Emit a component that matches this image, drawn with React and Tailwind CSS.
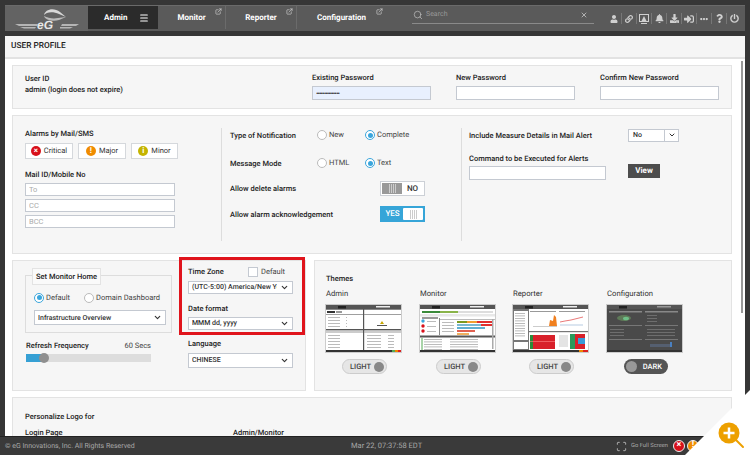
import { FaUser, FaLink, FaBell, FaDownload, FaSignInAlt, FaEllipsisH, FaQuestion, FaPowerOff } from "react-icons/fa";
import { Search, X, ExternalLink, Menu, ChevronDown, Scan } from "lucide-react";

const Label = ({ children, className = "" }) => (
  <div className={"text-[7.5px] leading-[11px] font-medium text-[#222] whitespace-nowrap " + className}>{children}</div>
);

const TextBox = ({ className = "", placeholder, value }) => (
  <input
    readOnly
    placeholder={placeholder}
    value={value}
    className={"block bg-white border border-[#c4c9d1] px-[3px] text-[7.5px] text-[#333] placeholder:text-[#aaa] outline-none " + className}
  />
);

const Select = ({ value, className = "" }) => (
  <div className={"flex items-center justify-between bg-white border border-[#c4c9d1] pl-[3px] pr-[3px] text-[7px] font-medium text-[#333] whitespace-nowrap overflow-hidden " + className}>
    <span className="overflow-hidden w-[88%]">{value}</span>
    <ChevronDown size={9} strokeWidth={3} className="shrink-0" />
  </div>
);

const Radio = ({ on, label, className = "" }) => (
  <div className={"flex items-center gap-[2px] text-[7.5px] text-[#444] whitespace-nowrap " + className}>
    <span className={"flex items-center justify-center w-[10px] h-[10px] rounded-full border bg-white " + (on ? "border-[#3ba6dc]" : "border-[#bbb]")}>
      {on && <span className="w-[5px] h-[5px] rounded-full bg-[#3ba6dc]" />}
    </span>
    {label}
  </div>
);

const Stripes = () => (
  <div className="flex gap-[1px]">
    {[0, 1, 2, 3].map((i) => (
      <span key={i} className="w-[1px] h-[9px] bg-[#ccc]" />
    ))}
  </div>
);

const ThemeToggle = ({ dark, className = "" }) =>
  dark ? (
    <div className={"flex items-center justify-between w-[44px] h-[15px] rounded-full bg-[#555] pl-[2px] pr-[6px] " + className}>
      <span className="w-[11px] h-[11px] rounded-full bg-[#999]" />
      <span className="text-[7.5px] font-medium text-white">DARK</span>
    </div>
  ) : (
    <div className={"flex items-center justify-between w-[45px] h-[15px] rounded-full bg-[#e6e6e6] border border-[#ccc] pl-[7px] pr-[2px] " + className}>
      <span className="text-[7.5px] font-medium text-[#444]">LIGHT</span>
      <span className="w-[10px] h-[10px] rounded-full bg-[#888]" />
    </div>
  );

const Logo = () => (
  <svg width="70" height="24" viewBox="0 0 70 24">
    <path d="M48 5 C42 0 33 2 32 8 C34 5 41 4 47 7 L54 10 Z" fill="#d8d8d8" />
    <path d="M32 9 C33 13 41 15 47 13 L54 10 L46 11 C41 12 36 11 32 9 Z" fill="#bbb" />
    <path d="M3 17 L26 17 L25 19 L7 19 Z M8 20 L24 20 L23 21.5 L12 21.5 Z" fill="#b5b5b5" />
    <path d="M67 17 L50 17 L49 19 L64 19 Z M61 20 L48 20 L48 21.5 L58 21.5 Z" fill="#b5b5b5" />
    <text x="25" y="22" fontSize="12" fontWeight="900" fontStyle="italic" fontFamily="Liberation Sans, sans-serif" fill="#e8e8e8">eG</text>
  </svg>
);

const NavTab = ({ label, className = "" }) => (
  <div className={"relative flex items-center justify-center h-full border-r border-[#6b6b6b] text-[8px] font-bold text-white " + className}>
    {label}
    <ExternalLink size={7} strokeWidth={2} className="absolute top-[2px] right-[3px] text-[#ddd]" />
  </div>
);

const MonitorAlert = () => (
  <svg width="10" height="10" viewBox="0 0 10 10" fill="none">
    <rect x="0.5" y="0.5" width="9" height="7" stroke="#d0d0d0" />
    <path d="M5 2 L8 8 H2 Z" fill="#d0d0d0" />
    <path d="M2 9.5 H8" stroke="#d0d0d0" />
  </svg>
);

const headerIcons = [
  <FaUser size={8} />,
  <FaLink size={8} />,
  <MonitorAlert />,
  <FaBell size={9} />,
  <FaDownload size={9} />,
  <FaSignInAlt size={10} />,
  <FaEllipsisH size={8} />,
  <FaQuestion size={9} />,
  <FaPowerOff size={9} />,
];

const AlarmButton = ({ bg, glyph, label, className = "" }) => (
  <div className={"flex items-center justify-center gap-[3px] h-[16px] bg-white border border-[#d5d8dc] text-[7.5px] text-[#333] " + className}>
    <span className={"flex items-center justify-center w-[10px] h-[10px] rounded-full text-[8px] font-bold text-white " + bg}>{glyph}</span>
    {label}
  </div>
);

const SwitchOff = () => (
  <div className="flex items-center w-[45px] h-[15px] bg-white border border-[#ccd0d6] p-[1px]">
    <div className="flex items-center justify-center w-[20px] h-full bg-[#999]"><Stripes /></div>
    <span className="flex-1 text-center text-[8px] font-medium text-[#333]">NO</span>
  </div>
);

const SwitchOn = () => (
  <div className="flex items-center w-[45px] h-[16px] bg-[#36a5d8] p-[2px]">
    <span className="flex-1 text-center text-[8px] font-medium text-white">YES</span>
    <div className="flex items-center justify-center w-[20px] h-full bg-white rounded-[1px]"><Stripes /></div>
  </div>
);

const Bars = ({ y, x, w, fill = "#aaa" }) => <rect x={x} y={y} width={w} height="0.8" fill={fill} />;

const ThumbChrome = ({ dark }) => (
  <>
    <rect width="75" height="47" fill={dark ? "#4a4a4a" : "#fff"} />
    <rect width="75" height="4" fill="#555" />
    <rect x="12" y="1" width="8" height="2.5" fill="#222" />
    <rect x="50" y="1" width="14" height="1.5" fill={dark ? "#999" : "#eee"} />
    <rect y="45" width="75" height="2" fill="#333" />
  </>
);

const ThumbAdmin = () => (
  <svg width="75" height="47" viewBox="0 0 75 47" className="block">
    <ThumbChrome />
    <rect x="0" y="4" width="75" height="1" fill="#888" />
    <rect x="37" y="4" width="1.2" height="41" fill="#555" />
    <rect x="0" y="24" width="75" height="1.4" fill="#555" />
    <rect x="1" y="6" width="8" height="2" fill="#333" />
    <rect x="10" y="6" width="6" height="2" fill="#999" />
    <rect x="0" y="9" width="37" height="0.8" fill="#888" />
    <rect x="38" y="9" width="37" height="0.8" fill="#888" />
    <rect x="0" y="26.5" width="37" height="1" fill="#999" />
    <rect x="38" y="26.5" width="37" height="1" fill="#999" />
    {[12, 15, 18, 21].map((y) => <Bars key={y} x={2} y={y} w={12} />)}
    {[12, 15, 18, 21].map((y) => <Bars key={y} x={20} y={y} w={1} />)}
    {[30, 33, 36, 39, 42].map((y) => <Bars key={y} x={2} y={y} w={12} />)}
    {[30, 33, 36, 39, 42].map((y) => <Bars key={y} x={41} y={y} w={14} />)}
    {[30, 33, 36, 39, 42].map((y) => <Bars key={y} x={62} y={y} w={6} />)}
    <path d="M56 16 L58 19 H54 Z" fill="#c9a800" />
    <rect x="51" y="20" width="10" height="1" fill="#555" />
    <rect x="66" y="45" width="3" height="2" fill="#5a5" />
    <rect x="69" y="45" width="3" height="2" fill="#e80" />
    <rect x="72" y="45" width="3" height="2" fill="#d22" />
  </svg>
);

const ThumbMonitor = () => (
  <svg width="75" height="47" viewBox="0 0 75 47" className="block">
    <ThumbChrome />
    <rect x="2" y="6" width="18" height="2" fill="#3a8a3a" />
    <rect x="20" y="6" width="18" height="2" fill="#8ab44a" />
    <rect x="38" y="6" width="35" height="2" fill="#ddd" />
    <rect x="0" y="9" width="75" height="2.5" fill="#e8e8e8" />
    <rect x="2" y="12" width="16" height="2" fill="#999" />
    <rect x="19" y="13" width="1" height="17" fill="#888" />
    {[16, 21, 26].map((y) => <circle key={y} cx="3" cy={y} r="1.7" fill={y === 16 ? "#3ba6dc" : "#d8101a"} />)}
    {[16, 21, 26].map((y) => <Bars key={y} x={7} y={y} w={9} />)}
    <rect x="20" y="14" width="55" height="1" fill="#bbb" />
    {[17, 20, 23, 26].map((y) => <Bars key={y} x={22} y={y} w={12} />)}
    <rect x="37" y="16" width="10" height="2" fill="#7a9a20" />
    <rect x="47" y="16" width="10" height="2" fill="#f0a030" />
    <rect x="57" y="16" width="16" height="2" fill="#e03030" />
    <rect x="37" y="19" width="24" height="2" fill="#7ab8d0" />
    <rect x="61" y="19" width="12" height="2" fill="#e03030" />
    <rect x="37" y="22" width="28" height="2" fill="#60b0d0" />
    <rect x="37" y="25" width="18" height="2" fill="#e06050" />
    <rect x="37" y="28" width="12" height="2" fill="#f0b060" />
    <rect x="0" y="30.5" width="75" height="2" fill="#555" />
    <rect x="1.5" y="33" width="1" height="12" fill="#5a5" />
    {[34, 36.5, 39, 41.5, 44].map((y) => <Bars key={y} x={4} y={y} w={18} />)}
    {[34, 36.5, 39, 41.5, 44].map((y) => <Bars key={y} x={30} y={y} w={28} />)}
    <rect x="72" y="14" width="1.5" height="30" fill="#aaa" />
  </svg>
);

const ThumbReporter = () => (
  <svg width="75" height="47" viewBox="0 0 75 47" className="block">
    <ThumbChrome />
    <rect x="0" y="4" width="16" height="41" fill="#777" />
    <rect x="1" y="6" width="14" height="29" fill="#fff" />
    <rect x="1" y="37" width="14" height="7" fill="#fff" />
    {[8, 10.5, 13, 15.5, 18, 20.5, 23, 25.5, 28, 30.5].map((y) => <Bars key={y} x={2} y={y} w={10} />)}
    <rect x="17" y="6" width="26" height="1" fill="#999" />
    <rect x="46" y="6" width="26" height="1" fill="#999" />
    <rect x="16" y="26" width="59" height="1.2" fill="#777" />
    <rect x="20" y="21" width="24" height="0.6" fill="#aaa" />
    <path d="M30 21 L36 21 L37 15 L40 16 L41 10 L43 12 L44 21 Z" fill="#f08020" />
    <path d="M47 17 L52 16 L58 15 L70 12" stroke="#e04040" fill="none" strokeWidth="0.7" />
    <path d="M47 20 H70" stroke="#8ac" strokeWidth="0.6" />
    <rect x="17" y="30" width="25" height="14" fill="#d8202a" />
    <rect x="17" y="30" width="3" height="14" fill="#2a8a3a" />
    <rect x="17" y="36" width="25" height="0.6" fill="#f88" />
    <rect x="57" y="29" width="15" height="15" fill="#d8202a" />
    <rect x="57" y="29" width="5" height="15" fill="#2a9a5a" />
    <rect x="65" y="33" width="7" height="6" fill="#3a9ad8" />
    <rect x="46" y="30" width="9" height="12" fill="#e4e4e4" />
    <rect x="66" y="45" width="4" height="2" fill="#e80" />
    <rect x="70" y="45" width="5" height="2" fill="#d22" />
  </svg>
);

const ThumbConfig = () => (
  <svg width="75" height="47" viewBox="0 0 75 47" className="block">
    <ThumbChrome dark />
    <rect x="2" y="6" width="33" height="1.5" fill="#888" />
    <rect x="38" y="6" width="33" height="1.5" fill="#888" />
    <ellipse cx="17" cy="13" rx="7" ry="3" fill="#5e7a58" />
    <ellipse cx="19" cy="13.5" rx="3" ry="1.8" fill="#6fc088" />
    {[10, 13, 16].map((y) => <Bars key={y} x={40} y={y} w={10} fill="#777" />)}
    <rect x="2" y="20" width="33" height="1" fill="#777" />
    <rect x="38" y="20" width="33" height="1" fill="#777" />
    {[24, 27, 30].map((y) => <Bars key={y} x={3} y={y} w={14} fill="#777" />)}
    {[24, 27, 30].map((y) => <Bars key={y} x={40} y={y} w={28} fill="#777" />)}
    <rect x="2" y="34" width="33" height="1" fill="#777" />
    <rect x="38" y="34" width="33" height="1" fill="#777" />
    <rect x="43" y="39" width="22" height="3" fill="#555f70" />
    <rect x="63" y="37" width="2" height="5" fill="#4a80c0" />
  </svg>
);

const themes = [
  { name: "Admin", thumb: <ThumbAdmin />, w: "w-[94px]", ml: "ml-[16px]" },
  { name: "Monitor", thumb: <ThumbMonitor />, w: "w-[93px]", ml: "ml-[16px]" },
  { name: "Reporter", thumb: <ThumbReporter />, w: "w-[94px]", ml: "ml-[16px]" },
  { name: "Configuration", thumb: <ThumbConfig />, w: "w-[94px]", ml: "ml-[17px]", dark: true },
];

const panel = "border border-[#e3e3e3] bg-[#f6f6f6]";

export default function App() {
  return (
    <div className="relative flex flex-col w-[750px] h-[455px] overflow-hidden bg-[#363636] font-['Roboto',sans-serif] [text-rendering:geometricPrecision]">
      {/* Top bar */}
      <div className="flex items-stretch shrink-0 h-[26px] mt-[5px] mx-[5px] bg-[#5a5a5a] border-t border-[#6a6a6a]">
        <div className="flex items-center justify-center w-[83px] bg-[#636363]"><Logo /></div>
        <div className="flex items-center gap-[12px] w-[70px] h-[23px] pl-[16px] bg-[#2b2b2b] text-[8px] font-bold text-white">
          Admin
          <Menu size={10} strokeWidth={2.5} />
        </div>
        <div className="flex h-[23px]">
          <NavTab label="Monitor" className="w-[68px]" />
          <NavTab label="Reporter" className="w-[71px]" />
          <NavTab label="Configuration" className="w-[89px] border-r-0" />
        </div>
        <div className="flex items-center gap-[3px] w-[182px] h-[18px] ml-[26px] border-b border-[#8a8a8a] text-[7px] text-[#999]">
          <Search size={10} strokeWidth={1.5} className="ml-[1px] text-[#ccc]" />
          <span className="flex-1">Search</span>
          <X size={8} strokeWidth={2} className="mr-[6px] text-[#ddd]" />
        </div>
        <div className="flex items-center h-[25px] ml-[12px] text-[#d0d0d0]">
          {headerIcons.map((icon, i) => (
            <div key={i} className={"flex items-center justify-center w-[15px] h-[11px] " + (i ? "border-l border-[#777]" : "")}>{icon}</div>
          ))}
        </div>
      </div>

      {/* Page */}
      <div className="relative flex-1 mt-[5px] mx-[5px] min-h-0 overflow-hidden bg-white">
        <div className="flex items-center h-[23px] pl-[6px] bg-[#f5f5f5] border-b-2 border-[#e2e2e2] text-[8.3px] font-medium text-[#222]">USER PROFILE</div>

        <div className="absolute right-[2px] top-[25px] w-[2px] h-[252px] bg-[#999]" />

        <div className="flex flex-col gap-[6px] w-[720px] ml-[7px] mt-[6px]">
          <div className={"flex h-[44px] pl-[12px] pt-[6px] " + panel}>
            <div className="w-[287px] pt-[1px]">
              <Label>User ID</Label>
              <Label>admin (login does not expire)</Label>
            </div>
            <div className="w-[144px]">
              <Label>Existing Password</Label>
              <TextBox value="•••••••••••••••" className="w-[119px] h-[14px] mt-[3px] !bg-[#e8f0fe] tracking-[-1px]" />
            </div>
            <div className="w-[144px]">
              <Label>New Password</Label>
              <TextBox className="w-[119px] h-[14px] mt-[3px]" />
            </div>
            <div>
              <Label>Confirm New Password</Label>
              <TextBox className="w-[119px] h-[14px] mt-[3px]" />
            </div>
          </div>

          <div className={"flex h-[139px] pl-[12px] pt-[12px] " + panel}>
            <div className="w-[196px]">
              <Label>Alarms by Mail/SMS</Label>
              <div className="flex mt-[4px] gap-[5px]">
                <AlarmButton bg="bg-[#d8101a]" glyph="×" label="Critical" className="w-[48px]" />
                <AlarmButton bg="bg-[#f08c00]" glyph="!" label="Major" className="w-[48px]" />
                <AlarmButton bg="bg-[#c4b400]" glyph="i" label="Minor" className="w-[47px]" />
              </div>
              <Label className="mt-[10px]">Mail ID/Mobile No</Label>
              <div className="flex flex-col gap-[3px] mt-[3px]">
                <TextBox placeholder="To" className="w-[150px] h-[13px]" />
                <TextBox placeholder="CC" className="w-[150px] h-[13px]" />
                <TextBox placeholder="BCC" className="w-[150px] h-[13px]" />
              </div>
            </div>

            <div className="w-[240px] h-[113px] border-l border-[#ddd] pl-[8px]">
              <div className="flex items-center h-[14px]">
                <Label className="w-[87px]">Type of Notification</Label>
                <Radio label="New" className="w-[48px]" />
                <Radio on label="Complete" />
              </div>
              <div className="flex items-center h-[14px] mt-[14px]">
                <Label className="w-[87px]">Message Mode</Label>
                <Radio label="HTML" className="w-[48px]" />
                <Radio on label="Text" />
              </div>
              <div className="flex items-center h-[15px] mt-[11px]">
                <Label className="w-[150px]">Allow delete alarms</Label>
                <SwitchOff />
              </div>
              <div className="flex items-center h-[16px] mt-[10px]">
                <Label className="w-[150px]">Allow alarm acknowledgement</Label>
                <SwitchOn />
              </div>
            </div>

            <div className="h-[113px] border-l border-[#ddd] pl-[7px]">
              <div className="flex items-center h-[14px]">
                <Label className="w-[159px]">Include Measure Details in Mail Alert</Label>
                <div className="flex items-center w-[51px] h-[13px] bg-white border border-[#c4c9d1] text-[7px] font-medium text-[#333]">
                  <span className="flex-1 pl-[4px]">No</span>
                  <span className="flex items-center justify-center w-[14px] h-full border-l border-[#c4c9d1]"><ChevronDown size={8} strokeWidth={3} /></span>
                </div>
              </div>
              <Label className="mt-[11px]">Command to be Executed for Alerts</Label>
              <div className="flex items-start">
                <TextBox className="w-[137px] h-[14px] mt-[2px]" />
                <div className="flex items-center justify-center w-[32px] h-[14px] ml-[22px] bg-[#4d4d4d] text-[8px] font-bold text-white">View</div>
              </div>
            </div>
          </div>

          <div className="flex gap-[8px] h-[131px]">
            <div className={"relative flex w-[294px] pl-[12px] pt-[14px] " + panel}>
              <div className="w-[163px]">
                <div className="relative w-[147px] h-[58px] border border-[#ddd] pt-[16px] pl-[8px]">
                  <div className="absolute left-[6px] -top-[8px] border border-[#e3e3e3] px-[3px] h-[17px] flex items-center bg-[#fafafa] text-[7.5px] font-medium text-[#222] whitespace-nowrap">Set Monitor Home</div>
                  <div className="flex">
                    <Radio on label="Default" className="w-[50px]" />
                    <Radio label="Domain Dashboard" />
                  </div>
                  <Select value="Infrastructure Overview" className="w-[132px] h-[15px] mt-[7px]" />
                </div>
                <div className="flex justify-between w-[125px] ml-[1px] mt-[7px]">
                  <Label>Refresh Frequency</Label>
                  <span className="text-[7.5px] leading-[11px] text-[#444]">60 Secs</span>
                </div>
                <div className="relative w-[125px] h-[8px] ml-[1px] mt-[3px] bg-[#ddd]">
                  <div className="w-[18px] h-full bg-[#36a0d4]" />
                  <div className="absolute left-[13px] -top-[1px] w-[10px] h-[10px] rounded-full bg-[#8f8f8f]" />
                </div>
              </div>
              <div className="w-[105px]">
                <div className="flex items-center h-[11px] -mt-[9px]">
                  <Label className="w-[60px]">Time Zone</Label>
                  <span className="w-[10px] h-[10px] border border-[#c4c9d1] bg-white" />
                  <span className="ml-[3px] text-[7.5px] text-[#444]">Default</span>
                </div>
                <Select value="(UTC-5:00) America/New York" className="w-[105px] h-[13px] mt-[4px]" />
                <Label className="mt-[9px]">Date format</Label>
                <Select value="MMM dd, yyyy" className="w-[105px] h-[13px] mt-[3px]" />
                <Label className="mt-[8px]">Language</Label>
                <Select value="CHINESE" className="w-[105px] h-[15px] mt-[4px]" />
              </div>
              {/* callout around time zone and date format */}
              <div className="absolute left-[166px] -top-[4px] w-[126px] h-[78px] border-[3px] border-[#e0141c]" />
            </div>

            <div className={"flex-1 pl-[11px] pt-[12px] " + panel}>
              <Label>Themes</Label>
              <div className="flex mt-[4px]">
                {themes.map((t) => (
                  <div key={t.name} className={t.w}>
                    <div className="text-[7.7px] leading-[11px] text-[#333]">{t.name}</div>
                    <div className="w-fit mt-[5px] border border-[#ccc] -ml-[1px]">{t.thumb}</div>
                    <ThemeToggle dark={t.dark} className={t.ml + " mt-[6px]"} />
                  </div>
                ))}
              </div>
            </div>
          </div>

          <div className={"h-[60px] pl-[12px] pt-[13px] " + panel}>
            <Label>Personalize Logo for</Label>
            <div className="flex mt-[5px]">
              <Label className="w-[208px]">Login Page</Label>
              <Label>Admin/Monitor</Label>
            </div>
          </div>
        </div>
      </div>

      {/* Footer */}
      <div className="flex items-center shrink-0 h-[19px] pl-[5px] bg-[#3a3a3a] border-t border-[#222] text-[#a8a8a8] whitespace-nowrap">
        <span className="w-[346px] text-[7px]">© eG Innovations, Inc. All Rights Reserved</span>
        <span className="w-[265px] text-[7.5px]">Mar 22, 07:37:58 EDT</span>
        <Scan size={11} className="text-[#ccc]" />
        <span className="ml-[4px] w-[42px] text-[5.8px]">Go Full Screen</span>
        <span className="flex items-center justify-center w-[12px] h-[12px] rounded-full bg-[#d8101a] border border-[#eee] text-[9px] font-bold text-white">×</span>
        <span className="flex items-center justify-center ml-[2px] w-[12px] h-[12px] rounded-full bg-[#f08c00] border border-[#eee] text-[9px] font-bold text-white">!</span>
      </div>

      {/* Corner fold with zoom button */}
      <div className="absolute right-0 bottom-0 w-[65px] h-[65px] bg-white [clip-path:polygon(100%_0,100%_100%,0_100%)]" />
      <svg width="28" height="28" viewBox="0 0 28 28" className="absolute left-[718px] top-[422px]">
        <path d="M17 17 L25 25" stroke="#eda000" strokeWidth="2" strokeLinecap="round" />
        <circle cx="11" cy="11" r="10.5" fill="#eda000" />
        <path d="M11 5.5 V16.5 M5.5 11 H16.5" stroke="#fff" strokeWidth="2.5" />
      </svg>
    </div>
  );
}
